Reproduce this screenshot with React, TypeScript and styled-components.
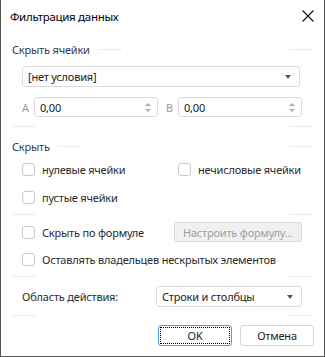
import React from "react";
import styled, { createGlobalStyle } from "styled-components";

const Global = createGlobalStyle`
  html, body { margin: 0; padding: 0; background: #fff; }
  body { font-family: "Noto Sans", "Liberation Sans", sans-serif; }
`;

const Dialog = styled.div`
  width: 325px;
  height: 357px;
  box-sizing: border-box;
  border: 1px solid #555;
  border-top: none;
  background: #fff;
  display: flex;
  flex-direction: column;
  padding: 0 11px;
  font-size: 11px;
  letter-spacing: -0.2px;
  color: #2b2b2b;
`;

const TitleBar = styled.div`
  height: 32px;
  display: flex;
  align-items: center;
  justify-content: space-between;
  margin: 0 -11px;
  padding: 0 10px 0 9px;
`;

const Title = styled.div`
  font-size: 11.5px;
  letter-spacing: -0.3px;
  color: #000;
`;

const CloseBtn = styled.div`
  width: 12px;
  height: 12px;
  display: flex;
  align-items: center;
  justify-content: center;
`;

const GroupHeader = styled.div<{ $mt: number }>`
  display: flex;
  align-items: center;
  height: 16px;
  margin-top: ${(p) => p.$mt}px;
  color: #3a3a4a;
`;

const Seg = styled.div`
  width: 24px;
  height: 1px;
  background: #ebebeb;
`;

const HeaderText = styled.span`
  margin-right: 8px;
`;

const Spacer = styled.div`
  flex: 1;
`;

const Separator = styled.div<{ $mt: number }>`
  display: flex;
  height: 1px;
  margin-top: ${(p) => p.$mt}px;
`;

const Indent = styled.div<{ $mt: number }>`
  margin-top: ${(p) => p.$mt}px;
  padding-left: 10px;
  display: flex;
  align-items: center;
`;

const Select = styled.div<{ $w: string }>`
  box-sizing: border-box;
  height: 21px;
  width: ${(p) => p.$w};
  border: 1px solid #dcdcdc;
  border-radius: 3px;
  display: flex;
  align-items: center;
  justify-content: space-between;
  padding: 0 8px 0 5px;
  color: #222;
`;

const Caret = styled.div`
  width: 0;
  height: 0;
  border-left: 3.5px solid transparent;
  border-right: 3.5px solid transparent;
  border-top: 4px solid #555;
`;

const SpinLabel = styled.span<{ $ml?: number }>`
  color: #999;
  width: 12px;
  margin-left: ${(p) => p.$ml ?? 0}px;
`;

const Spin = styled.div`
  box-sizing: border-box;
  height: 20px;
  width: 124px;
  border: 1px solid #dcdcdc;
  border-radius: 3px;
  display: flex;
  align-items: center;
  justify-content: space-between;
  padding: 0 6px 0 5px;
  color: #222;
`;

const SpinArrows = styled.div`
  display: flex;
  flex-direction: column;
  gap: 3px;
`;

const Tri = styled.div<{ $up?: boolean }>`
  width: 0;
  height: 0;
  border-left: 3px solid transparent;
  border-right: 3px solid transparent;
  ${(p) => (p.$up ? "border-bottom: 3px solid #aaa;" : "border-top: 3px solid #aaa;")}
`;

const CheckRow = styled.div<{ $mt: number }>`
  margin-top: ${(p) => p.$mt}px;
  padding-left: 10px;
  height: 20px;
  display: flex;
  align-items: center;
`;

const CheckItem = styled.label<{ $w?: number }>`
  display: flex;
  align-items: center;
  gap: 7px;
  white-space: nowrap;
  ${(p) => (p.$w ? `width: ${p.$w}px;` : "")}
`;

const Box = styled.span`
  box-sizing: border-box;
  flex: none;
  width: 13px;
  height: 13px;
  border: 1px solid #c8c8c8;
  border-radius: 3px;
  background: #fff;
`;

const FormulaBtn = styled.div`
  box-sizing: border-box;
  margin-left: auto;
  margin-right: 11px;
  width: 128px;
  height: 20px;
  border: 1px solid #dcdcdc;
  border-radius: 3px;
  background: #f0f0f0;
  color: #a0a0a0;
  display: flex;
  align-items: center;
  justify-content: center;
  white-space: nowrap;
`;

const ScopeLabel = styled.span`
  width: 134px;
`;

const Footer = styled.div<{ $mt: number }>`
  margin-top: ${(p) => p.$mt}px;
  margin-right: -1px;
  display: flex;
  justify-content: flex-end;
  gap: 8px;
`;

const Button = styled.div<{ $focus?: boolean }>`
  box-sizing: border-box;
  width: 74px;
  height: 21px;
  border: 1px solid ${(p) => (p.$focus ? "#4d9de0" : "#d4d4d4")};
  border-radius: 3px;
  display: flex;
  align-items: center;
  justify-content: center;
  color: #222;
  position: relative;
  ${(p) => (p.$focus ? "&::after { content: ''; position: absolute; inset: 1px; border: 1px dotted #000; }" : "")}
`;

function Check({ label, w }: { label: string; w?: number }) {
  return (
    <CheckItem $w={w}>
      <Box />
      <span>{label}</span>
    </CheckItem>
  );
}

function Line({ mt }: { mt: number }) {
  return (
    <Separator $mt={mt}>
      <Seg />
      <Spacer />
      <Seg />
    </Separator>
  );
}

function Header({ mt, text }: { mt: number; text: string }) {
  return (
    <GroupHeader $mt={mt}>
      <HeaderText>{text}</HeaderText>
      <Seg />
      <Spacer />
      <Seg />
    </GroupHeader>
  );
}

function SpinBox() {
  return (
    <Spin>
      <span>0,00</span>
      <SpinArrows>
        <Tri $up />
        <Tri />
      </SpinArrows>
    </Spin>
  );
}

export default function App() {
  return (
    <>
      <Global />
      <Dialog>
        <TitleBar>
          <Title>Фильтрация данных</Title>
          <CloseBtn>
            <svg width="12" height="12" viewBox="0 0 12 12">
              <path d="M0.5 0.5L11.5 11.5M11.5 0.5L0.5 11.5" stroke="#111" strokeWidth="1.1" />
            </svg>
          </CloseBtn>
        </TitleBar>
        <Header mt={9} text="Скрыть ячейки" />
        <Indent $mt={9}>
          <Select $w="278px">
            <span>[нет условия]</span>
            <Caret />
          </Select>
        </Indent>
        <Indent $mt={10}>
          <SpinLabel>А</SpinLabel>
          <SpinBox />
          <SpinLabel $ml={8}>В</SpinLabel>
          <SpinBox />
        </Indent>
        <Line mt={9} />
        <Header mt={11} text="Скрыть" />
        <CheckRow $mt={5}>
          <Check label="нулевые ячейки" w={156} />
          <Check label="нечисловые ячейки" />
        </CheckRow>
        <CheckRow $mt={8}>
          <Check label="пустые ячейки" />
        </CheckRow>
        <Line mt={7} />
        <CheckRow $mt={7}>
          <Check label="Скрыть по формуле" />
          <FormulaBtn>Настроить формулу...</FormulaBtn>
        </CheckRow>
        <CheckRow $mt={7}>
          <Check label="Оставлять владельцев нескрытых элементов" />
        </CheckRow>
        <Line mt={7} />
        <Indent $mt={9}>
          <ScopeLabel>Область действия:</ScopeLabel>
          <Select $w="146px">
            <span>Строки и столбцы</span>
            <Caret />
          </Select>
        </Indent>
        <Line mt={8} />
        <Footer $mt={9}>
          <Button $focus>OK</Button>
          <Button>Отмена</Button>
        </Footer>
      </Dialog>
    </>
  );
}
